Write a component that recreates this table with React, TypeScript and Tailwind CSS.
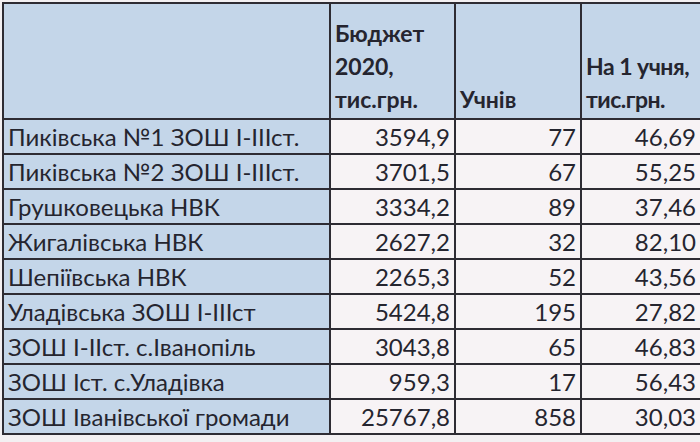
import React from 'react';

const rows = [
  ['Пиківська №1 ЗОШ І-ІІІст.', '3594,9', '77', '46,69'],
  ['Пиківська №2 ЗОШ І-ІІІст.', '3701,5', '67', '55,25'],
  ['Грушковецька НВК', '3334,2', '89', '37,46'],
  ['Жигалівська НВК', '2627,2', '32', '82,10'],
  ['Шепіївська НВК', '2265,3', '52', '43,56'],
  ['Уладівська ЗОШ І-ІІІст', '5424,8', '195', '27,82'],
  ['ЗОШ І-ІІст. с.Іванопіль', '3043,8', '65', '46,83'],
  ['ЗОШ Іст. с.Уладівка', '959,3', '17', '56,43'],
  ['ЗОШ Іванівської громади', '25767,8', '858', '30,03'],
];

const App = () => {
  return (
    <div className="w-[700px] h-[442px] bg-[#f3f0f2] pl-[2px] pt-[2px] overflow-hidden font-['Lato','Liberation_Sans',sans-serif] text-[#25252f]">
      <div className="grid grid-cols-[325px_123px_124px_126px] grid-rows-[114px_repeat(9,33px)] gap-[2px] bg-[#2e2c33] p-[2px] w-[706px]">
        <div className="bg-[#c4d6e9]" />
        <div className="bg-[#c4d6e9] flex flex-col justify-end px-[4px] pb-[2px] text-[23px] font-bold leading-[33px] whitespace-nowrap">
          <span>Бюджет</span>
          <span>2020,</span>
          <span>тис.грн.</span>
        </div>
        <div className="bg-[#c4d6e9] flex flex-col justify-end px-[4px] pb-[2px] text-[23px] font-bold leading-[33px]">
          <span>Учнів</span>
        </div>
        <div className="bg-[#c4d6e9] flex flex-col justify-end px-[4px] pb-[2px] text-[23px] font-bold leading-[33px] whitespace-nowrap tracking-[-0.5px]">
          <span>На 1 учня,</span>
          <span>тис.грн.</span>
        </div>
        {rows.map((r) => (
          <React.Fragment key={r[0]}>
            <div className="bg-[#c4d6e9] flex items-center px-[4px] text-[24px] whitespace-nowrap">{r[0]}</div>
            <div className="bg-[#f7f3f5] flex items-center justify-end px-[4px] text-[24px]">{r[1]}</div>
            <div className="bg-[#f7f3f5] flex items-center justify-end px-[4px] text-[24px]">{r[2]}</div>
            <div className="bg-[#f7f3f5] flex items-center justify-end pr-[12px] text-[24px]">{r[3]}</div>
          </React.Fragment>
        ))}
      </div>
    </div>
  );
};

export default App;
